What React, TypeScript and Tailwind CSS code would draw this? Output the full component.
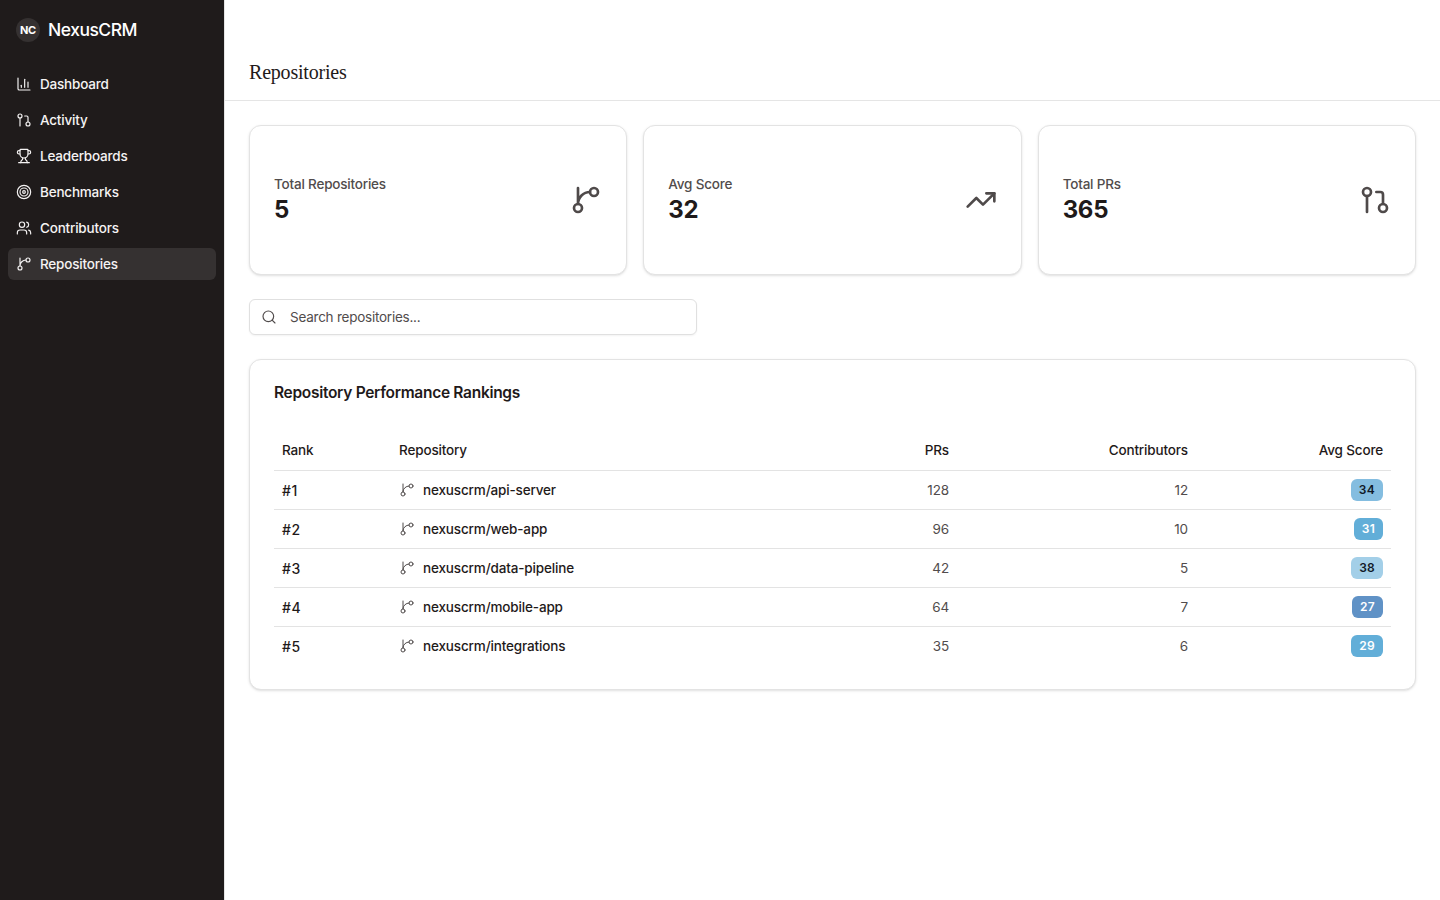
import { ChartColumn, GitPullRequest, Trophy, Target, Users, TrendingUp, Search } from "lucide-react";

function GitBranch({ size = 16, strokeWidth = 2, className = "" }: { size?: number; strokeWidth?: number; className?: string }) {
  return (
    <svg width={size} height={size} viewBox="0 0 24 24" fill="none" stroke="currentColor" strokeWidth={strokeWidth} strokeLinecap="round" strokeLinejoin="round" className={className}>
      <path d="M15 6a9 9 0 0 0-9 9V3" />
      <circle cx="18" cy="6" r="3" />
      <circle cx="6" cy="18" r="3" />
    </svg>
  );
}

const nav = [
  { label: "Dashboard", Icon: ChartColumn },
  { label: "Activity", Icon: GitPullRequest },
  { label: "Leaderboards", Icon: Trophy },
  { label: "Benchmarks", Icon: Target },
  { label: "Contributors", Icon: Users },
  { label: "Repositories", Icon: GitBranch, active: true },
];

const stats = [
  { label: "Total Repositories", value: "5", Icon: GitBranch },
  { label: "Avg Score", value: "32", Icon: TrendingUp },
  { label: "Total PRs", value: "365", Icon: GitPullRequest },
];

const rows = [
  { rank: "#1", name: "nexuscrm/api-server", prs: 128, contributors: 12, score: 34, badge: "bg-[#84bde0] text-[#111a28]" },
  { rank: "#2", name: "nexuscrm/web-app", prs: 96, contributors: 10, score: 31, badge: "bg-[#62aed8] text-white" },
  { rank: "#3", name: "nexuscrm/data-pipeline", prs: 42, contributors: 5, score: 38, badge: "bg-[#a3cfe8] text-[#111a28]" },
  { rank: "#4", name: "nexuscrm/mobile-app", prs: 64, contributors: 7, score: 27, badge: "bg-[#6092c6] text-white" },
  { rank: "#5", name: "nexuscrm/integrations", prs: 35, contributors: 6, score: 29, badge: "bg-[#62aed8] text-white" },
];

export default function App() {
  return (
    <div className="flex min-h-[900px] bg-white font-['Inter',sans-serif] text-[#1f1a1a]">
      <aside className="w-[225px] shrink-0 border-r border-[#e5e5e5] bg-[#1f1b1b]">
        <div className="flex h-[60px] items-center gap-2 px-4">
          <div className="flex h-6 w-6 items-center justify-center rounded-full bg-[#353131] text-[11px] font-bold tracking-tight text-white">NC</div>
          <span className="text-[17.5px] font-medium tracking-[-0.5px] text-white">NexusCRM</span>
        </div>
        <nav className="flex flex-col gap-1 px-2 pt-2">
          {nav.map(({ label, Icon, active }) => (
            <div key={label} className={`flex h-8 items-center gap-2 rounded-md px-2 text-[13.5px] font-medium tracking-[-0.2px] text-[#f5f3f3] ${active ? "bg-[#353131]" : ""}`}>
              <Icon size={16} strokeWidth={1.75} />
              <span>{label}</span>
            </div>
          ))}
        </nav>
      </aside>
      <main className="min-w-0 flex-1">
        <header className="flex h-[101px] items-end border-b border-[#e5e5e5] px-6 pb-[14px]">
          <h1 className="font-['Liberation_Serif',serif] text-[20px] leading-7 tracking-[-0.2px] text-[#1f1a1a]">Repositories</h1>
        </header>
        <div className="flex flex-col gap-6 p-6">
          <div className="grid grid-cols-3 gap-4">
            {stats.map(({ label, value, Icon }) => (
              <div key={label} className="flex h-[150px] items-center justify-between rounded-xl border border-[#e3e3e3] bg-white px-6 shadow-sm">
                <div>
                  <div className="text-[13.5px] leading-5 font-medium tracking-[-0.2px] text-[#514c4c]">{label}</div>
                  <div className="text-[24px] leading-8 font-bold tracking-[-0.3px] text-[#1f1a1a]">{value}</div>
                </div>
                <Icon size={32} strokeWidth={2} className="text-[#4f4a4a]" />
              </div>
            ))}
          </div>
          <div className="relative h-9 w-[448px]">
            <Search size={16} strokeWidth={1.75} className="absolute top-[10px] left-3 text-[#514c4c]" />
            <input
              placeholder="Search repositories..."
              className="h-9 w-full rounded-md border border-[#e0e0e0] bg-white pr-3 pl-10 text-[13.5px] tracking-[-0.24px] shadow-xs outline-none placeholder:text-[#514c4c]"
            />
          </div>
          <section className="rounded-xl border border-[#e3e3e3] bg-white px-6 pt-[23px] pb-6 shadow-sm">
            <h2 className="text-[15.5px] leading-5 font-semibold tracking-[-0.3px] text-[#1f1a1a]">Repository Performance Rankings</h2>
            <table className="mt-[27px] w-full table-fixed border-collapse text-[13.5px] tracking-[-0.15px]">
              <colgroup>
                <col className="w-[117px]" />
                <col />
                <col className="w-[157px]" />
                <col className="w-[239px]" />
                <col className="w-[195px]" />
              </colgroup>
              <thead>
                <tr className="h-10 border-b border-[#e3e3e3] font-medium">
                  <th className="px-2 text-left font-medium">Rank</th>
                  <th className="px-2 text-left font-medium">Repository</th>
                  <th className="px-2 text-right font-medium">PRs</th>
                  <th className="px-2 text-right font-medium">Contributors</th>
                  <th className="px-2 text-right font-medium">Avg Score</th>
                </tr>
              </thead>
              <tbody>
                {rows.map((r, i) => (
                  <tr key={r.rank} className={`h-[39px] ${i < rows.length - 1 ? "border-b border-[#e3e3e3]" : ""}`}>
                    <td className="px-2 pt-px text-[14px] font-medium tracking-[0.5px]">{r.rank}</td>
                    <td className="px-2 pt-px">
                      <div className="flex items-center gap-2 font-medium">
                        <GitBranch size={16} strokeWidth={1.5} className="text-[#4f4a4a]" />
                        <span>{r.name}</span>
                      </div>
                    </td>
                    <td className="px-2 pt-px text-right text-[#514c4c]">{r.prs}</td>
                    <td className="px-2 pt-px text-right text-[#514c4c]">{r.contributors}</td>
                    <td className="px-2 text-right">
                      <span className={`inline-block h-[22px] rounded-md px-2 text-[12px] leading-[22px] font-semibold tracking-[0.25px] align-middle ${r.badge}`}>{r.score}</span>
                    </td>
                  </tr>
                ))}
              </tbody>
            </table>
          </section>
        </div>
      </main>
    </div>
  );
}
